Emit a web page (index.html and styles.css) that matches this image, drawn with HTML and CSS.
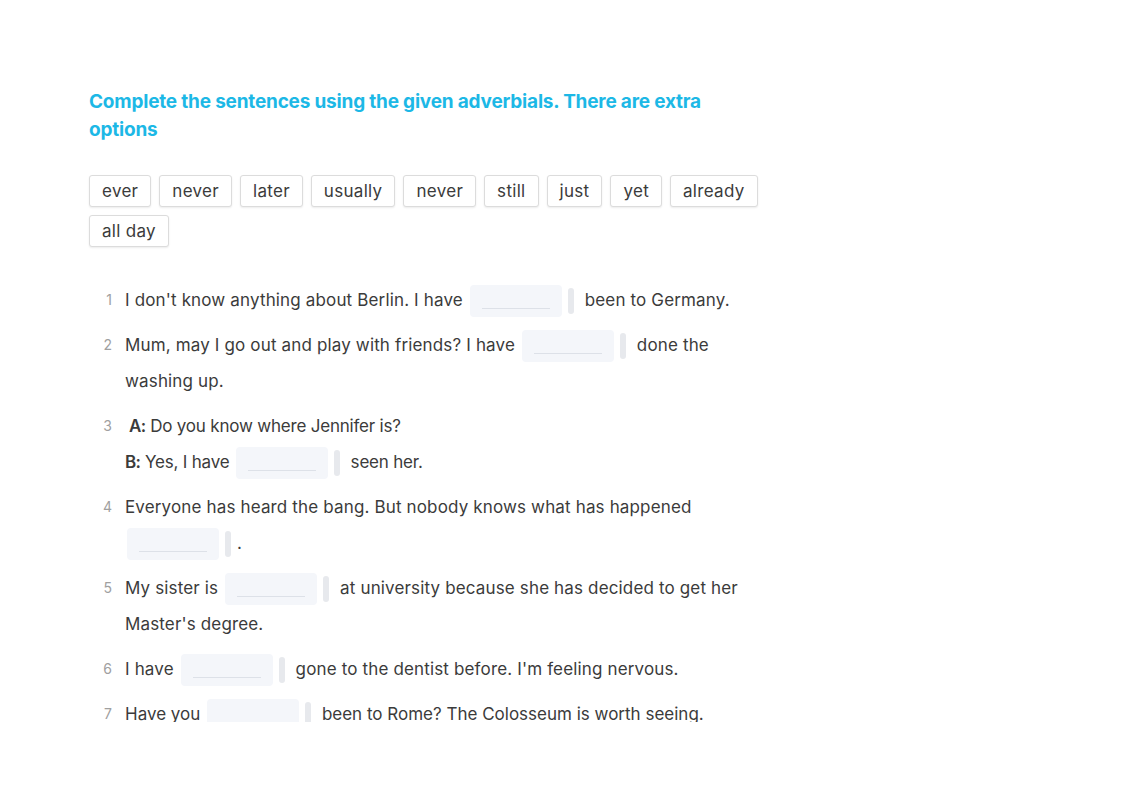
FILE: index.html
```html
<!DOCTYPE html>
<html lang="en">
<head>
<meta charset="utf-8">
<title>Adverbials exercise</title>
<link rel="stylesheet" href="styles.css">
</head>
<body>
<div class="viewport">
  <div class="sheet">
    <h1 class="title">Complete the sentences using the given adverbials. There are extra options</h1>
    <div class="chips">
      <span class="chip">ever</span>
      <span class="chip">never</span>
      <span class="chip">later</span>
      <span class="chip">usually</span>
      <span class="chip">never</span>
      <span class="chip">still</span>
      <span class="chip">just</span>
      <span class="chip">yet</span>
      <span class="chip">already</span>
      <span class="chip">all day</span>
    </div>
    <ol class="items">
      <li class="item"><span class="num">1</span><p class="text">I don't know anything about Berlin. I have <span class="blank"></span><span class="bar"></span> been to Germany.</p></li>
      <li class="item"><span class="num">2</span><p class="text">Mum, may I go out and play with friends? I have <span class="blank"></span><span class="bar"></span> done the washing up.</p></li>
      <li class="item"><span class="num">3</span><p class="text dialog"><span class="dialog-a"><b>A:</b> Do you know where Jennifer is?</span><br><b>B:</b> Yes, I have <span class="blank"></span><span class="bar"></span> seen her.</p></li>
      <li class="item"><span class="num">4</span><p class="text">Everyone has heard the bang. But nobody knows what has happened <span class="blank"></span><span class="bar"></span>.</p></li>
      <li class="item"><span class="num">5</span><p class="text">My sister is <span class="blank"></span><span class="bar"></span> at university because she has decided to get her Master's degree.</p></li>
      <li class="item"><span class="num">6</span><p class="text">I have <span class="blank"></span><span class="bar"></span> gone to the dentist before. I'm feeling nervous.</p></li>
      <li class="item"><span class="num">7</span><p class="text tight">Have you <span class="blank"></span><span class="bar"></span> been to Rome? The Colosseum is worth seeing.</p></li>
    </ol>
  </div>
</div>
</body>
</html>
```
FILE: styles.css
```css
html, body {
  margin: 0;
  padding: 0;
  background: #ffffff;
}

body {
  font-family: Inter, "Noto Sans", "Liberation Sans", sans-serif;
  color: #3b3b3b;
}

.viewport {
  height: 722px;
  overflow: hidden;
}

.sheet {
  width: 680px;
  padding: 88px 0 0 89px;
}

.title {
  margin: 0;
  font-size: 19px;
  line-height: 28px;
  font-weight: 700;
  color: #1cb8e6;
  letter-spacing: -0.2px;
}

.chips {
  display: flex;
  flex-wrap: wrap;
  gap: 8px;
  margin-top: 31px;
}

.chip {
  display: inline-flex;
  align-items: center;
  height: 32px;
  box-sizing: border-box;
  padding: 0 12px;
  border: 1px solid #dcdcdc;
  border-radius: 3px;
  box-shadow: 0 1px 2px rgba(0, 0, 0, 0.08);
  font-size: 17px;
  letter-spacing: 0.3px;
  color: #3b3b3b;
  background: #fff;
}

.items {
  list-style: none;
  margin: 35px 0 0;
  padding: 0;
  display: flex;
  flex-direction: column;
  gap: 9px;
}

.item {
  display: flex;
  align-items: flex-start;
}

.num {
  flex: 0 0 23px;
  text-align: right;
  margin-right: 13px;
  font-size: 14px;
  line-height: 36px;
  color: #a0a0a0;
}

.text {
  margin: 0;
  font-size: 17px;
  line-height: 36px;
  letter-spacing: 0.15px;
  flex: 1;
}

.text.dialog {
  letter-spacing: -0.2px;
}

.text.tight {
  letter-spacing: 0;
}

.text b {
  font-weight: 600;
  letter-spacing: -0.6px;
}

.dialog-a {
  padding-left: 4px;
}

.blank {
  display: inline-block;
  position: relative;
  width: 92px;
  height: 32px;
  margin: 0 6px 0 2px;
  vertical-align: middle;
  background: #f4f6fa;
  border-radius: 4px;
}

.blank::after {
  content: "";
  position: absolute;
  left: 12px;
  right: 12px;
  top: 23px;
  height: 1px;
  background: #dde1e8;
}

.bar {
  display: inline-block;
  width: 6px;
  height: 26px;
  margin-right: 6px;
  vertical-align: middle;
  background: #e7e9ed;
  border-radius: 3px;
}
```
